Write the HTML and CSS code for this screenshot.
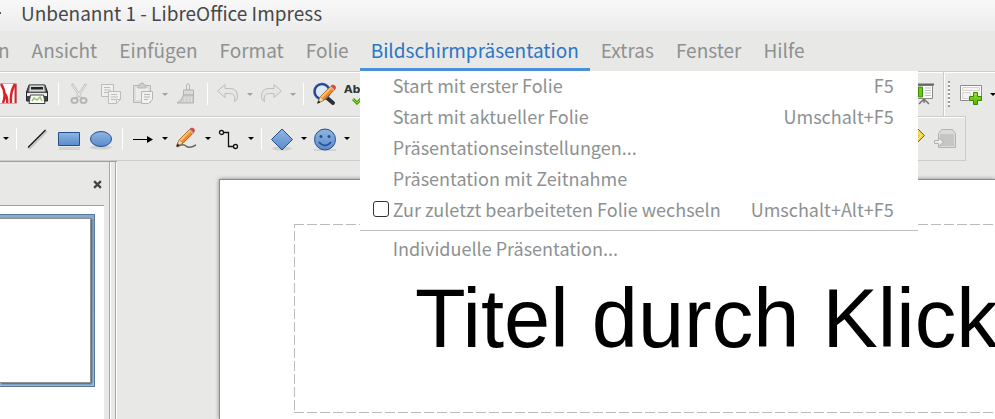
FILE: index.html
```
<!DOCTYPE html>
<html lang="de">
<head>
    <meta charset="UTF-8">
    <title>Unbenannt 1 - LibreOffice Impress</title>
    <link rel="stylesheet" href="styles.css">
</head>
<body>
    <svg class="defs" width="0" height="0" aria-hidden="true">
        <defs>
            <linearGradient id="blue" x1="0" y1="0" x2="0" y2="1">
                <stop offset="0" stop-color="#8fb6e3"/>
                <stop offset="1" stop-color="#5a8bcb"/>
            </linearGradient>
            <linearGradient id="green" x1="0" y1="0" x2="0" y2="1">
                <stop offset="0" stop-color="#9be81c"/>
                <stop offset="1" stop-color="#4fae08"/>
            </linearGradient>
            <g id="pencil">
                <path d="M3 21l3-7L18 2l4 4L10 18z" fill="#f08c28" stroke="#a85a10"/>
                <path d="M7 15L18 4" stroke="#ffc27a" stroke-width="2"/>
                <path d="M3 21l3-7 4 4z" fill="#f3dcae" stroke="#8a6a3a" stroke-width=".6"/>
                <path d="M2.500 22l1.500-4 2 2.500z" fill="#222"/>
                <path d="M16.500 3.500l4 4 1.500-1.500-4-4z" fill="#b8bcc0"/>
                <path d="M18 2q2-2 4 0t0 4z" fill="#e8413c" stroke="#c03a36" stroke-width=".6"/>
            </g>
        </defs>
    </svg>

    <div class="window">
        <header class="titlebar"><span class="dot"></span><span>Unbenannt 1 - LibreOffice Impress</span></header>

        <nav class="menubar">
            <button type="button">n</button>
            <button type="button">Ansicht</button>
            <button type="button">Einfügen</button>
            <button type="button">Format</button>
            <button type="button">Folie</button>
            <div class="open">
                <button type="button">Bildschirmpräsentation</button>
                <div class="menu">
                    <button type="button"><span>Start mit erster Folie</span><span>F5</span></button>
                    <button type="button"><span>Start mit aktueller Folie</span><span>Umschalt+F5</span></button>
                    <button type="button"><span>Präsentationseinstellungen...</span></button>
                    <button type="button"><span>Präsentation mit Zeitnahme</span></button>
                    <label for="lastSlide"><input type="checkbox" id="lastSlide"><span>Zur zuletzt bearbeiteten Folie wechseln</span><span>Umschalt+Alt+F5</span></label>
                    <hr>
                    <button type="button"><span>Individuelle Präsentation...</span></button>
                </div>
            </div>
            <button type="button">Extras</button>
            <button type="button">Fenster</button>
            <button type="button">Hilfe</button>
        </nav>

        <div class="toolbar">
            <div class="group main standard">
                <button type="button" class="tool" aria-label="PDF">
                    <svg viewBox="0 0 24 24"><path d="M0 1.500h23.500v20H0z" fill="#fff" stroke="#b9b9b9"/><path d="M8 2q6 9 2 19M11 11q4 4 3 10M22 2q-5 8-4 19" fill="none" stroke="#d8232a" stroke-width="2.500"/><path d="M22.500 2v19" stroke="#d8232a" stroke-width="2"/></svg>
                </button>
                <button type="button" class="tool" aria-label="Drucken">
                    <svg viewBox="0 0 24 24"><path d="M4 3h16l2.500 7v9H1.500v-9z" fill="#3c4143" stroke="#25282a"/><path d="M4.500 3h15l1 7h-17z" fill="#d5d8d5" stroke="#666"/><path d="M6 5h12v2.500H6z" fill="#222"/><path d="M2 11h20v3H2z" fill="#e9e9e7"/><path d="M5.500 13h13l1.500 8.500H4z" fill="#fff" stroke="#444"/><path d="M7 19l2-3 3 2 3-3 2 4" fill="none" stroke="#8ec66a" stroke-width="1.500"/></svg>
                </button>
                <i class="sep"></i>
                <button type="button" class="tool" aria-label="Ausschneiden">
                    <svg viewBox="0 0 24 24" fill="none" stroke="#b6b6b4"><path d="M5 2l9.500 14M19 2L9.500 16" stroke="#c2c2c0" stroke-width="2.500"/><path d="M5.500 3l8.500 12M18.500 3L10 15" stroke="#ededeb"/><ellipse cx="7.500" cy="18.500" rx="3" ry="2.500" stroke-width="2"/><ellipse cx="16.500" cy="18.500" rx="3" ry="2.500" stroke-width="2"/></svg>
                </button>
                <button type="button" class="tool" aria-label="Kopieren">
                    <svg viewBox="0 0 24 24" fill="#f0f0ee" stroke="#bcbcba"><path d="M2.500 2.500h12v12h-12z"/><path d="M5 5.500h6M5 8h7M5 10.500h5"/><path d="M9.500 9.500h12v8l-4 4h-8z"/><path d="M12 12.500h6M12 15h7M12 17.500h5M21 17.500h-3.500V21"/></svg>
                </button>
                <button type="button" class="tool" aria-label="Einfügen">
                    <svg viewBox="0 0 24 24" fill="#dededc" stroke="#b6b6b4"><path d="M2.500 3.500h17v17h-17z"/><path d="M5 6h12v12H5z" fill="#ececea" stroke="none"/><path d="M7 6V3h2q0-2 2-2t2 2h2v3z" fill="#cfcfcd"/><path d="M10.500 9.500h11v8l-4 4h-7z" fill="#f1f1ef"/><path d="M13 12.500h6M13 15h6M13 17.500h4"/></svg>
                </button>
                <button type="button" class="drop off" aria-label="Mehr"></button>
                <button type="button" class="tool" aria-label="Format übertragen">
                    <svg viewBox="0 0 24 24" fill="#cfcfcd" stroke="#b2b2b0"><path d="M12.500 8V3q1.500-3 3 0v5z" fill="#ececea"/><path d="M9.500 8h10v5h-10z" fill="#dadad8"/><path d="M9.500 13h10v8H3q5-2 6.500-8z"/><path d="M12 15l-2 5M15 15l-1 5M17.500 15v5" stroke="#e3e3e1"/></svg>
                </button>
                <i class="sep"></i>
                <button type="button" class="tool" aria-label="Rückgängig">
                    <svg viewBox="0 0 24 24"><path d="M1.500 9L9 2.500v4h5q8 0 7.500 9-.5 3-3 4 2-8-5-8H9v4z" fill="#e6e6e4" stroke="#bdbdbb"/></svg>
                </button>
                <button type="button" class="drop off" aria-label="Mehr"></button>
                <button type="button" class="tool" aria-label="Wiederherstellen">
                    <svg viewBox="0 0 24 24"><path d="M22.500 9L15 2.500v4h-5q-8 0-7.500 9 .5 3 3 4-2-8 5-8H15v4z" fill="#e6e6e4" stroke="#bdbdbb"/></svg>
                </button>
                <button type="button" class="drop off" aria-label="Mehr"></button>
                <i class="sep"></i>
                <button type="button" class="tool" aria-label="Suchen und Ersetzen">
                    <svg viewBox="0 0 24 24"><path d="M14 15l7 6" stroke="#2c3033" stroke-width="4" stroke-linecap="round"/><circle cx="10" cy="9.500" r="7.500" fill="#dbe8f5" stroke="#26428f" stroke-width="2.500"/><circle cx="10" cy="9.500" r="8.500" fill="none" stroke="#7086b8" stroke-width=".5"/><use href="#pencil" transform="translate(3 2) scale(.9)"/></svg>
                </button>
                <button type="button" class="tool spell" aria-label="Rechtschreibung">
                    <span>Abc</span>
                    <svg viewBox="0 0 12 8"><path d="M1 2l4 4 6-6" fill="none" stroke="#4e9a06" stroke-width="3"/><path d="M1 2l4 4 6-6" fill="none" stroke="#8ae234"/></svg>
                </button>
                <button type="button" class="tool last" aria-label="Präsentation">
                    <svg viewBox="0 0 24 24"><path d="M13 17l-5 5M13 17l5 5M13 15v6" fill="none" stroke="#777" stroke-width="1.500"/><path d="M3.500 3.500h18v13h-18z" fill="#fff" stroke="#888"/><path d="M1 2.500h22" stroke="#666" stroke-width="2"/><path d="M7.500 5h4v10h-4z" fill="#6cc811" stroke="#3c8a08"/><path d="M14 6h6M14 8.500h6M14 11h6M14 13.500h6" stroke="#bbb"/></svg>
                </button>
            </div>
            <div class="group extra">
                <i class="grip"></i>
                <button type="button" class="tool" aria-label="Neue Folie">
                    <svg viewBox="0 0 24 24"><path d="M1.500 3.500h21v15h-21z" fill="#fff" stroke="#8d8d8b"/><path d="M3.500 5.500h17v3h-17zM3.500 10.500h8v6h-8z" fill="#f4f4f4" stroke="#d4d4d2"/><path d="M14.500 10.500h4v4h4v4h-4v4h-4v-4h-4v-4h4z" fill="url(#green)" stroke="#3b8607"/></svg>
                </button>
                <button type="button" class="drop" aria-label="Mehr"></button>
            </div>
        </div>

        <div class="toolbar">
            <div class="group main">
                <button type="button" class="drop" aria-label="Mehr"></button>
                <i class="sep"></i>
                <button type="button" class="tool" aria-label="Linie">
                    <svg viewBox="0 0 24 24"><path d="M4 22L22 4" stroke="#c4c4c2" stroke-width="2"/><path d="M3 20.500L20.500 3" stroke="#111" stroke-width="1.300"/></svg>
                </button>
                <button type="button" class="tool" aria-label="Rechteck">
                    <svg viewBox="0 0 24 24"><path d="M2 20h21v3H2z" fill="#d3d3d1"/><path d="M1.500 5.500h21v13h-21z" fill="url(#blue)" stroke="#23518f"/></svg>
                </button>
                <button type="button" class="tool" aria-label="Ellipse">
                    <svg viewBox="0 0 24 24"><ellipse cx="12" cy="20.500" rx="11" ry="2" fill="#d0d0ce"/><ellipse cx="12" cy="12" rx="10.500" ry="7.500" fill="url(#blue)" stroke="#23518f"/></svg>
                </button>
                <i class="sep"></i>
                <button type="button" class="tool" aria-label="Pfeil">
                    <svg viewBox="0 0 24 24"><path d="M2 12.500h15" stroke="#000"/><path d="M16 9l6 3.500-6 3.500z"/></svg>
                </button>
                <button type="button" class="drop" aria-label="Mehr"></button>
                <button type="button" class="tool" aria-label="Kurve">
                    <svg viewBox="0 0 24 24"><path d="M3 20q6-4 9-1t10-1" fill="none" stroke="#666" stroke-width="1.500"/><use href="#pencil" transform="scale(.9)"/></svg>
                </button>
                <button type="button" class="drop" aria-label="Mehr"></button>
                <button type="button" class="tool" aria-label="Verbinder">
                    <svg viewBox="0 0 24 24" fill="#fff" stroke="#111" stroke-width="1.300"><path d="M6 5.500h5.500v14H18" fill="none"/><circle cx="4.500" cy="5.500" r="2"/><circle cx="18.500" cy="19.500" r="2"/></svg>
                </button>
                <button type="button" class="drop" aria-label="Mehr"></button>
                <i class="sep"></i>
                <button type="button" class="tool" aria-label="Standardformen">
                    <svg viewBox="0 0 24 24"><ellipse cx="12" cy="21.500" rx="10" ry="2" fill="#cfcfcd"/><path d="M12 2l10.500 10.500L12 23 1.500 12.500z" fill="url(#blue)" stroke="#23518f"/></svg>
                </button>
                <button type="button" class="drop" aria-label="Mehr"></button>
                <button type="button" class="tool" aria-label="Symbolformen">
                    <svg viewBox="0 0 24 24"><path d="M1 22h22v2H1z" fill="#d3d3d1"/><circle cx="12" cy="12.500" r="10.500" fill="url(#blue)" stroke="#23518f"/><circle cx="8" cy="9.500" r="1.500" fill="#23518f"/><circle cx="16" cy="9.500" r="1.500" fill="#23518f"/><path d="M6 15q6 7 12 0" fill="none" stroke="#23518f" stroke-width="1.500"/></svg>
                </button>
                <button type="button" class="drop" aria-label="Mehr"></button>
                <button type="button" class="tool last" aria-label="Punkte">
                    <svg viewBox="0 0 24 24"><path d="M15 0l8.500 8.500L15 17 6.500 8.500z" fill="#f3d33c" stroke="#7d6208"/><path d="M15 3l5.500 5.500L15 14" fill="none" stroke="#fbeb8e"/></svg>
                </button>
                <button type="button" class="tool" aria-label="Extrusion">
                    <svg viewBox="0 0 24 24"><path d="M5.500 6.500l3-4h11l3 4v14h-17z" fill="#dbdbd9" stroke="#b3b3b1"/><path d="M7 7h14v12H7z" fill="#c6c6c4"/><path d="M1.500 13.500h4v-3l5 4.500-5 4.500v-3h-4z" fill="#ececea" stroke="#b0b0ae"/></svg>
                </button>
            </div>
        </div>

        <main class="work">
            <aside class="slides">
                <div class="head">
                    <button type="button" aria-label="Schließen">
                        <svg viewBox="0 0 8 8"><path d="M1 1l6 6M7 1L1 7" stroke="#444" stroke-width="2"/></svg>
                    </button>
                </div>
                <div class="list"><div class="thumb"><div></div></div></div>
            </aside>
            <section class="canvas">
                <div class="page">
                    <div class="frame"><h1>Titel durch Klick</h1></div>
                </div>
            </section>
        </main>
    </div>
</body>
</html>
```

FILE: styles.css
```
* {
    box-sizing: border-box;
}
body {
    margin: 0;
    background: #e8e8e6;
    color: #8e9191;
    font: 19px/28px "Noto Sans CJK SC", "Noto Sans", sans-serif;
}
button {
    margin: 0;
    padding: 0;
    border: 0;
    background: none;
    color: inherit;
    font: inherit;
}
.defs {
    position: absolute;
}
.window {
    display: flex;
    flex-direction: column;
    height: 100vh;
    overflow: hidden;
}

/* title and menu */
.titlebar {
    display: flex;
    align-items: center;
    flex: none;
    gap: 20px;
    height: 31px;
    padding-bottom: 6px;
    background: linear-gradient(#f8f8f8, #ececec);
    color: #454849;
    white-space: nowrap;
}
.dot {
    width: 1px;
    height: 2px;
    background: #555;
}
.menubar {
    display: flex;
    flex: none;
    height: 40px;
    margin-left: -13px;
}
.menubar > button,
.open > button {
    height: 40px;
    padding: 0 11px 2px;
    white-space: nowrap;
}
.open {
    position: relative;
}
.open > button {
    border-bottom: 3px solid #4a90d9;
    padding: 1px 11px 0;
    color: #2a76c6;
}
.menu {
    position: absolute;
    z-index: 1;
    top: 40px;
    left: 0;
    width: 558px;
    padding-bottom: 4px;
    background: #fff;
    font-size: 18px;
}
.menu button,
.menu label {
    display: flex;
    align-items: center;
    justify-content: space-between;
    width: 100%;
    height: 31px;
    padding: 0 24px 4px 33px;
    white-space: nowrap;
}
.menu label {
    padding-left: 13px;
}
.menu label span:last-child {
    margin-left: auto;
}
.menu input {
    appearance: none;
    flex: none;
    width: 16px;
    height: 16px;
    margin: 0 4px 0 0;
    border: 1px solid #2e3436;
    border-radius: 3px;
    background: #fff;
}
.menu hr {
    margin: 4px 0 3px;
    border: 0;
    border-top: 1px solid #bfbfbf;
}

/* toolbars */
.toolbar {
    display: flex;
    flex: none;
    height: 45px;
}
.toolbar + .toolbar {
    padding-right: 29px;
}
.group {
    display: flex;
    align-items: center;
    border-top: 1px solid #ccc;
    border-right: 1px solid #ccc;
    box-shadow: inset 0 1px #fff;
}
.main {
    flex: 1;
    min-width: 0;
    padding-right: 4px;
}
.standard .tool:first-child {
    margin-left: -11px;
}
.toolbar + .toolbar .group {
    border-bottom: 1px solid #ccc;
}
.extra {
    width: 51px;
    border-right: 0;
    box-shadow: inset 1px 1px #fff;
}
.tool {
    flex: none;
    width: 32px;
    height: 32px;
    padding: 4px;
}
.tool svg {
    display: block;
    width: 24px;
    height: 24px;
}
.last {
    margin-left: auto;
}
.drop {
    flex: none;
    width: 11px;
    height: 32px;
}
.drop::before {
    content: "";
    display: block;
    width: 0;
    margin: auto;
    border: solid transparent;
    border-width: 3px 3px 0;
    border-top-color: #000;
}
.drop.off::before {
    border-top-color: #a2a2a0;
}
.sep {
    flex: none;
    width: 10px;
    height: 22px;
    background: linear-gradient(#fff, #fff) center / 1px 100% no-repeat;
}
.grip {
    flex: none;
    width: 2px;
    height: 26px;
    margin: 0 5px 0 4px;
    background: repeating-linear-gradient(#999 0 2px, #fff 2px 4px);
}
.tool.spell {
    padding: 0 4px;
    color: #2e3436;
    font: bold 11px/14px "DejaVu Sans", sans-serif;
    text-align: left;
}
.tool.spell svg {
    width: 12px;
    height: 8px;
    margin-left: 8px;
}

/* slide pane and page */
.work {
    display: flex;
    flex: 1;
    min-height: 0;
}
.slides {
    display: flex;
    flex-direction: column;
    flex: none;
    width: 117px;
    border-top: 1px solid #a0a09e;
    padding-right: 13px;
    background: linear-gradient(90deg, #a6a6a4 1px, #fff 1px 2px, #e8e8e6 2px 6px, #a6a6a4 6px 7px, #fff 7px) right / 8px 100% no-repeat;
}
.head {
    height: 44px;
    padding: 18px 2px 0 0;
    border-bottom: 1px solid #a0a09e;
    text-align: right;
}
.head button,
.head svg {
    display: block;
    width: 9px;
    height: 9px;
    margin-left: auto;
}
.list {
    flex: 1;
    padding: 8px 9px 0 0;
    background: #fff;
}
.thumb {
    height: 173px;
    padding: 3px 3px 3px 0;
    border: 1px solid #55789c;
    border-left: 0;
    background: linear-gradient(#8aabcc, #9dbfe2);
}
.thumb div {
    height: 100%;
    border: 1px solid #8f8f8f;
    border-left: 0;
    background: #fff;
    box-shadow: 1px 1px 2px #456;
}
.canvas {
    flex: 1;
    min-width: 0;
    padding: 18px 0 0 102px;
}
.page {
    height: 100%;
    padding: 44px 0 0 74px;
    border: solid #8b8b8b;
    border-width: 1px 0 0 1px;
    background: #fff;
    box-shadow: 0 0 4px #888;
}
.frame {
    height: 189px;
    padding-left: 121px;
    overflow: hidden;
    background:
        repeating-linear-gradient(90deg, #bbb 0 10px, transparent 10px 13px) top / 100% 1px no-repeat,
        repeating-linear-gradient(90deg, #bbb 0 10px, transparent 10px 13px) bottom / 100% 1px no-repeat,
        repeating-linear-gradient(#bbb 0 4px, transparent 4px 7px, #bbb 7px 13px) left / 1px 100% no-repeat;
}
.frame h1 {
    margin: 0;
    color: #000;
    font: 83px/190px "Liberation Sans", Arial, sans-serif;
    white-space: nowrap;
}
```
